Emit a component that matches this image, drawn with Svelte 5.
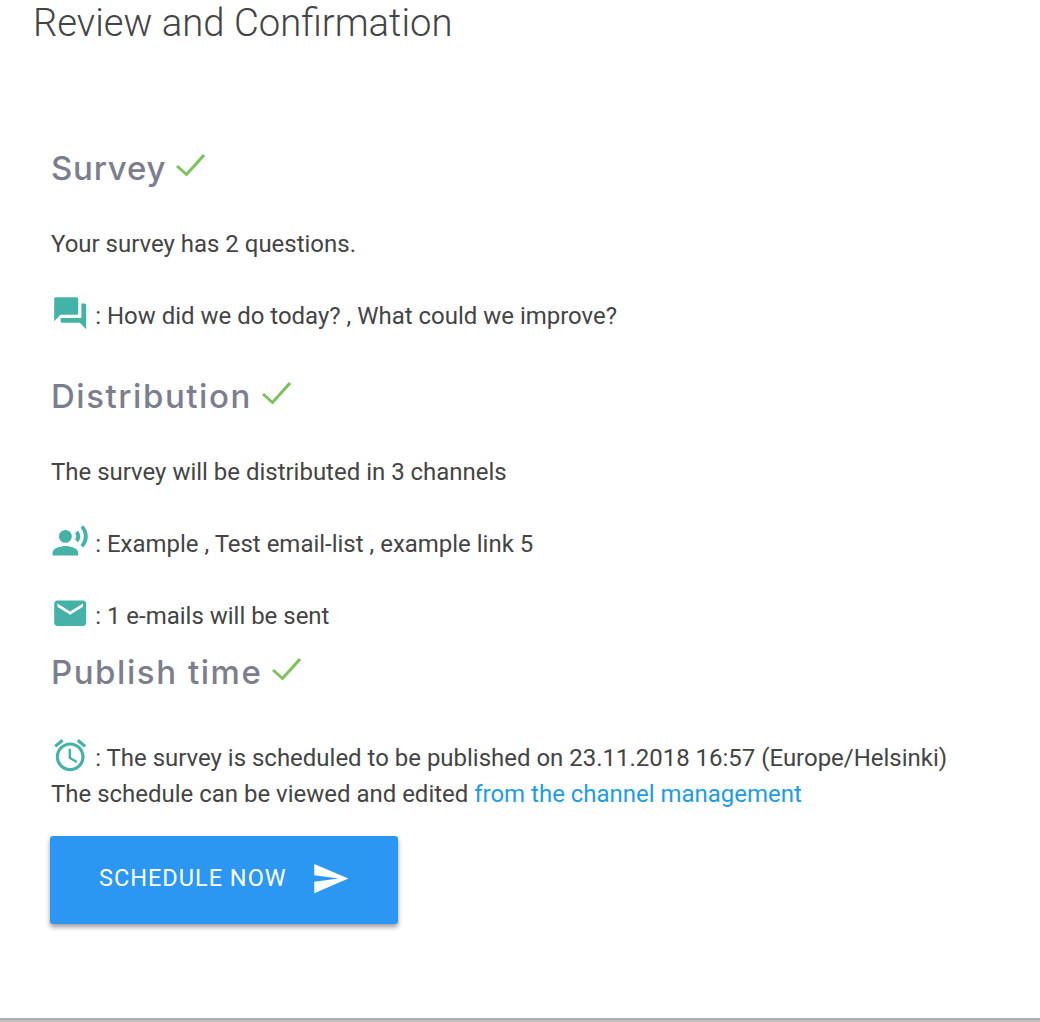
<script>
    const questions = 'How did we do today? , What could we improve?'
    const channels = 'Example , Test email-list , example link 5'
</script>

{#snippet check()}
    <svg class="check" viewBox="0 0 30 24" width="30" height="24">
        <polyline points="2,13 11.5,21.5 29,2" fill="none" stroke="#7ac25a" stroke-width="3" />
    </svg>
{/snippet}

<div class="page">
    <h1>Review and Confirmation</h1>

    <section class="steps">
        <h2 class="survey">Survey {@render check()}</h2>
        <p class="plain">Your survey has 2 questions.</p>
        <p class="row">
            <svg viewBox="0 0 24 24" class="icon">
                <path d="M21 6h-2v9H6v2c0 .55.45 1 1 1h11l4 4V7c0-.55-.45-1-1-1zm-4 6V3c0-.55-.45-1-1-1H3c-.55 0-1 .45-1 1v14l4-4h10c.55 0 1-.45 1-1z" />
            </svg>
            <span>: {questions}</span>
        </p>

        <h2 class="distribution">Distribution {@render check()}</h2>
        <p class="plain">The survey will be distributed in 3 channels</p>
        <p class="row">
            <svg viewBox="0 0 24 24" class="icon">
                <circle cx="9" cy="9" r="4" />
                <path d="M9 15c-2.67 0-8 1.34-8 4v2h16v-2c0-2.66-5.33-4-8-4zm7.76-9.64l-1.68 1.69c.84 1.18.84 2.71 0 3.89l1.68 1.69c2.02-2.02 2.02-5.07 0-7.27zM20.07 2l-1.63 1.63c2.77 3.02 2.77 7.56 0 10.74L20.07 16c3.9-3.89 3.91-9.95 0-14z" />
            </svg>
            <span>: {channels}</span>
        </p>
        <p class="row last">
            <svg viewBox="0 0 24 24" class="icon">
                <path d="M20 4H4c-1.1 0-1.99.9-1.99 2L2 18c0 1.1.9 2 2 2h16c1.1 0 2-.9 2-2V6c0-1.1-.9-2-2-2zm0 4l-8 5-8-5V6l8 5 8-5v2z" />
            </svg>
            <span>: 1 e-mails will be sent</span>
        </p>

        <h2 class="publish">Publish time {@render check()}</h2>
        <p class="row schedule">
            <svg viewBox="0 0 24 24" class="icon">
                <path d="M22 5.72l-4.6-3.86-1.29 1.53 4.6 3.86L22 5.72zM7.88 3.39L6.6 1.86 2 5.71l1.29 1.53 4.59-3.85zM12.5 8H11v6l4.75 2.85.75-1.23-4-2.37V8zM12 4c-4.97 0-9 4.03-9 9s4.02 9 9 9c4.97 0 9-4.03 9-9s-4.03-9-9-9zm0 16c-3.87 0-7-3.13-7-7s3.13-7 7-7 7 3.13 7 7-3.13 7-7 7z" />
            </svg>
            <span>: The survey is scheduled to be published on 23.11.2018 16:57 (Europe/Helsinki)</span>
        </p>
        <p class="plain edit">The schedule can be viewed and edited <a href="#channels">from the channel management</a></p>

        <button type="button">
            <span>SCHEDULE NOW</span>
            <svg viewBox="0 0 24 24" width="39" height="39">
                <path d="M2.01 21L23 12 2.01 3 2 10l15 2-15 2z" />
            </svg>
        </button>
    </section>
</div>
<div class="edge"></div>

<style>
    .page {
        height: 1018px;
        overflow: hidden;
        background: #fff;
        font-family: Roboto, sans-serif;
        color: #444;
    }

    .edge {
        height: 4px;
        background: linear-gradient(#a6a6a6, #cbcbcb);
    }

    h1 {
        margin: 0;
        padding: 0 0 0 33px;
        font-size: 38.25px;
        font-weight: 300;
        line-height: 46px;
    }

    .steps {
        padding: 0 0 0 51px;
    }

    h2 {
        display: flex;
        align-items: center;
        gap: 10px;
        margin: 0;
        font-family: Inter, sans-serif;
        font-size: 33px;
        font-weight: 500;
        letter-spacing: 1.55px;
        line-height: 40px;
        color: #7c7e8e;
    }

    .survey {
        margin-top: 102px;
        letter-spacing: 0.8px;
    }

    .distribution {
        margin-top: 42px;
    }

    .publish {
        margin-top: 18px;
    }

    .check {
        margin-top: -7px;
        margin-left: -1px;
    }

    p {
        margin: 0;
        font-size: 23.98px;
        line-height: 36px;
    }

    .plain {
        margin-top: 38px;
    }

    .row {
        display: flex;
        align-items: center;
        gap: 5.8px;
        height: 36px;
        margin-top: 36px;
        white-space: nowrap;
    }

    .schedule {
        margin-top: 48px;
    }

    .edit {
        margin-top: 0;
    }

    .icon {
        flex: none;
        width: 38.4px;
        height: 38.4px;
        margin-top: -6px;
        fill: #44b2a6;
    }

    a {
        color: #1c9ce8;
        text-decoration: none;
    }

    button {
        display: inline-flex;
        align-items: center;
        gap: 24px;
        width: 348px;
        height: 88px;
        margin: 24px 0 0 -1px;
        padding: 0 0 3px 49px;
        border: 0;
        border-radius: 3px;
        background: #2b97f2;
        box-shadow: 0 3px 5px rgba(0, 0, 0, 0.4);
        color: #fff;
        font-family: Roboto, sans-serif;
        font-size: 23.5px;
        letter-spacing: 1px;
    }

    button span {
        margin-bottom: 2px;
    }

    button svg {
        fill: #fff;
    }
</style>
